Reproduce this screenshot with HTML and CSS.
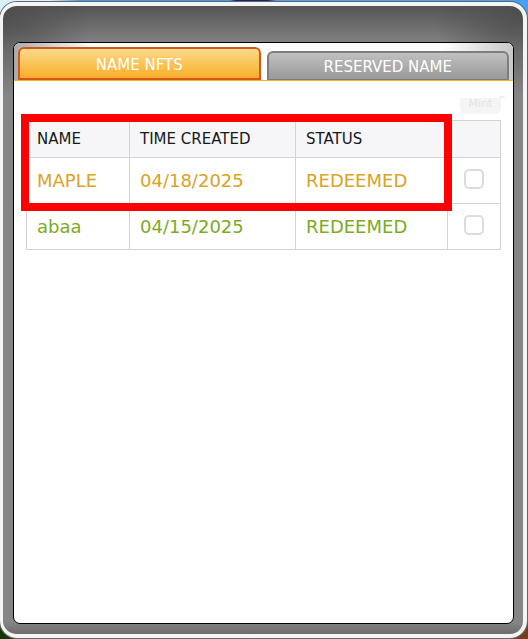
FILE: index.html
```html
<!DOCTYPE html>
<html lang="en">
<head>
<meta charset="utf-8">
<title>Name NFTs</title>
<link rel="stylesheet" href="styles.css">
</head>
<body>
<main class="frame">
  <section class="panel">
    <nav class="tabs">
      <button class="tab tab-active" type="button">NAME NFTS</button>
      <button class="tab" type="button">RESERVED NAME</button>
    </nav>
    <div class="content">
      <div class="toolbar">
        <button class="mint" type="button" disabled>Mint</button>
        <span class="arc"></span>
      </div>
      <div class="table-wrap">
        <table>
          <colgroup><col class="col-name"><col class="col-time"><col class="col-status"><col class="col-check"></colgroup>
          <thead>
            <tr><th>NAME</th><th>TIME CREATED</th><th>STATUS</th><th></th></tr>
          </thead>
          <tbody>
            <tr class="gold"><td>MAPLE</td><td>04/18/2025</td><td>REDEEMED</td><td class="check"><input type="checkbox" aria-label="Select MAPLE"></td></tr>
            <tr class="green"><td>abaa</td><td>04/15/2025</td><td>REDEEMED</td><td class="check"><input type="checkbox" aria-label="Select abaa"></td></tr>
          </tbody>
        </table>
        <div class="highlight"></div>
      </div>
    </div>
  </section>
</main>
</body>
</html>
```
FILE: styles.css
```css
* { box-sizing: border-box; }

body {
  margin: 0;
  height: 100vh;
  padding: 2px 1px 1px 0;
  display: flex;
  font-family: "DejaVu Sans", sans-serif;
  background:
    linear-gradient(90deg, #d9f1fc 0, #d9f1fc 50px, #3b9cf5 80px, #3b9cf5 230px, #15246b 236px, #15246b 268px, #459ffb 276px, #459ffb 100%) top / 100% 20px no-repeat,
    linear-gradient(90deg, #123808 0 50%, #74401f 50%) bottom / 100% 30px no-repeat,
    #555;
}

.frame {
  flex: 1;
  display: flex;
  padding: 36px 9px 9px 10px;
  border: 4px solid #f4f4f4;
  border-width: 4px 4px 4px 3px;
  border-radius: 17px;
  box-shadow: 0 0 0 1px #666;
  background:
    radial-gradient(circle at 100% 0, #4e4e4e 0, #4e4e4e00 90px),
    radial-gradient(circle at 0 0, #4e4e4e 0, #4e4e4e00 90px),
    linear-gradient(#555 0, #858585 40px, #858585 calc(100% - 12px), #6c6c6c 100%);
}

.panel {
  flex: 1;
  min-width: 0;
  margin-bottom: 1px;
  border: 1px solid #000;
  border-radius: 7px;
  background: #fff;
  overflow: hidden;
}

.tabs {
  display: flex;
  align-items: flex-end;
  gap: 6px;
  height: 38px;
  padding: 0 4px;
  border-bottom: 1px solid #f8b229;
  background: linear-gradient(90deg, #aaa 0, #fff 80px, #fff calc(100% - 70px), #c8c8c8 100%);
}

.tab {
  flex: 1;
  height: 29px;
  padding: 2px 0 0;
  border: 2px solid #7e7e7e;
  border-bottom-width: 1px;
  border-radius: 6px 6px 0 0;
  background: linear-gradient(#c0c0c0, #999);
  color: #fff;
  font: 15px "DejaVu Sans", sans-serif;
}

.tab-active {
  height: 33px;
  border-color: #d2571a;
  border-bottom-width: 2px;
  background: linear-gradient(#fcd98a, #f8ae27);
}

.content { padding: 15px 12px 0; }

.toolbar {
  position: relative;
  display: flex;
  justify-content: flex-end;
  height: 24px;
  padding-top: 2px;
}

.mint {
  width: 41px;
  height: 16px;
  padding: 0 0 4px;
  border: 0;
  border-radius: 0 0 6px 6px;
  background: #f5f5f5;
  color: #e4e4e4;
  font: 11px/12px "DejaVu Sans", sans-serif;
}

.arc {
  position: absolute;
  top: 0;
  right: -4px;
  width: 6px;
  height: 2px;
  border-radius: 3px 3px 0 0;
  background: #eee;
}

.table-wrap { position: relative; }

table {
  width: 100%;
  table-layout: fixed;
  border-collapse: collapse;
}

.col-name { width: 103px; }
.col-time { width: 166px; }
.col-check { width: 53px; }

th, td {
  padding: 0 10px;
  border: 1px solid #d3d3d3;
  text-align: left;
  font-weight: 400;
  white-space: nowrap;
}

th {
  height: 37px;
  background: #f6f6f9;
  color: #181818;
  font-size: 15px;
}

td {
  height: 46px;
  font-size: 18px;
}

.gold { color: #d9a326; }
.green { color: #7daa25; }

.check {
  padding: 0 0 4px;
  text-align: center;
}

input {
  appearance: none;
  display: block;
  width: 20px;
  height: 20px;
  margin: 0 auto;
  border: 2px solid #dcdcdc;
  border-radius: 5px;
  background: #fff;
}

.highlight {
  position: absolute;
  inset: -6px 49px auto -5px;
  height: 97px;
  border: 8px solid #f00;
  pointer-events: none;
}
```
